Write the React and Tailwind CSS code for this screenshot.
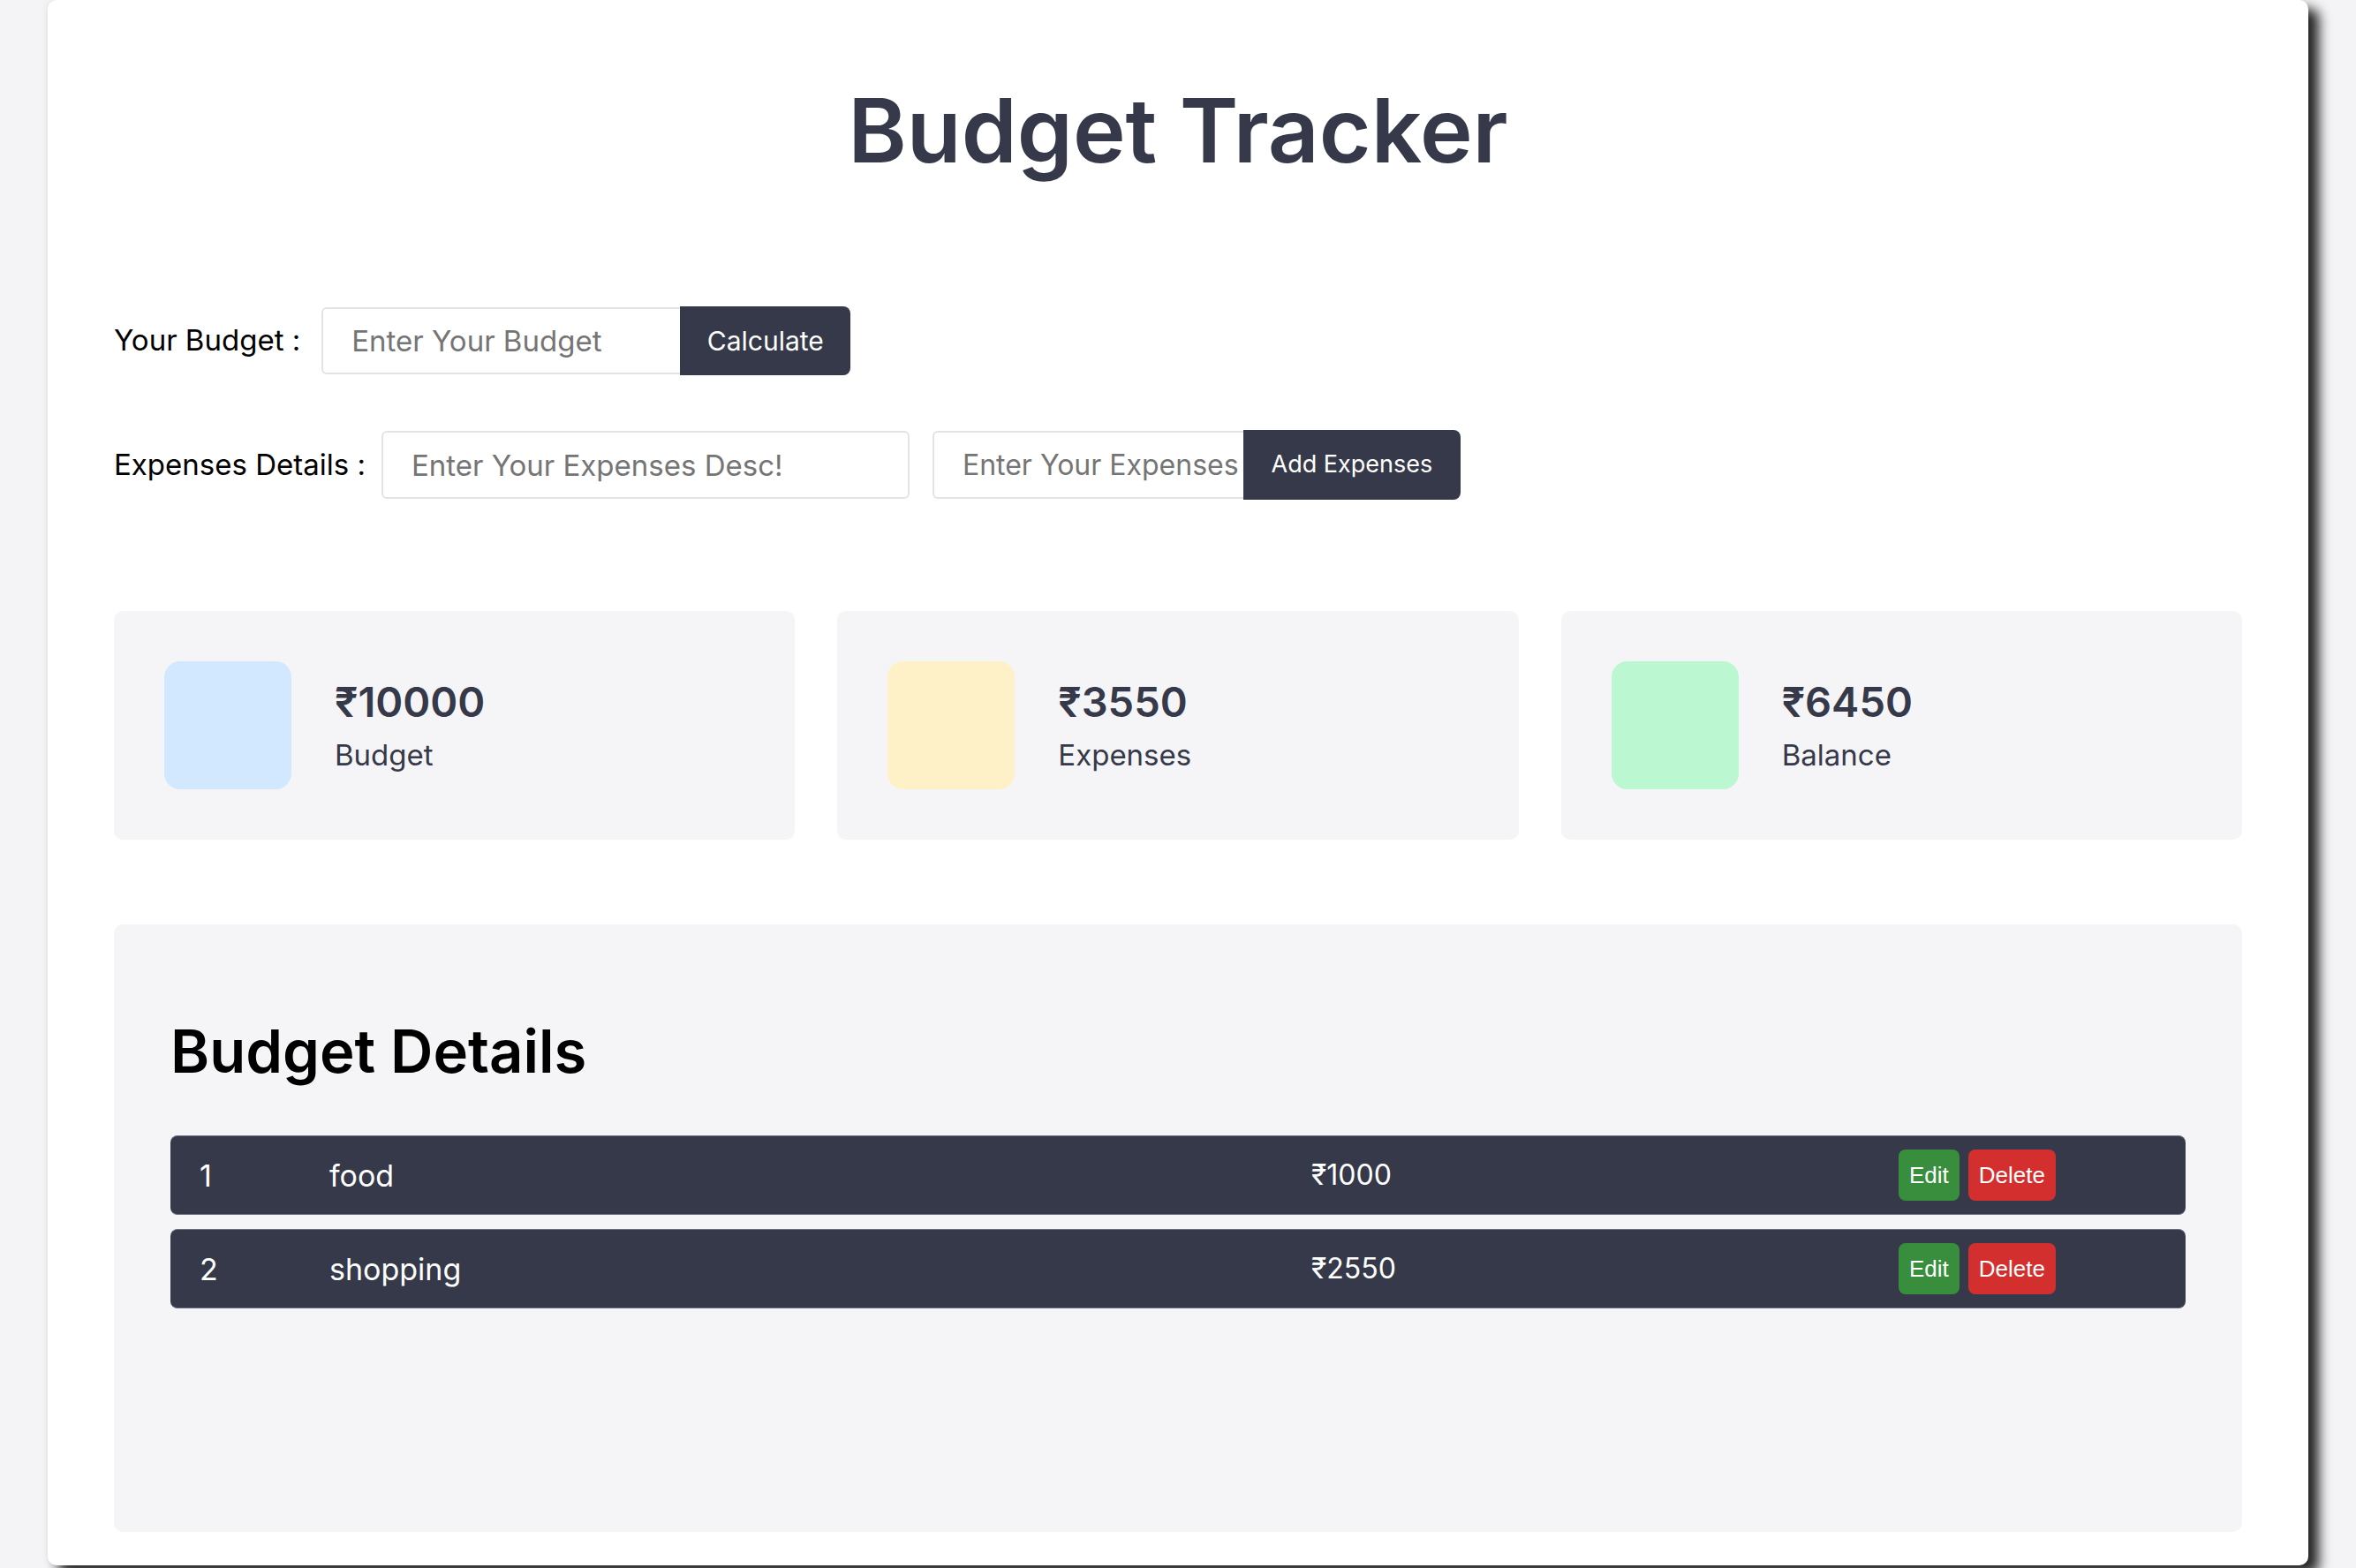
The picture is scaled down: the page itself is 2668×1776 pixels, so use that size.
import React from 'react';

const stats = [
  { amount: '₹10000', label: 'Budget', color: 'bg-[#d1e8fe]' },
  { amount: '₹3550', label: 'Expenses', color: 'bg-[#fef0c7]' },
  { amount: '₹6450', label: 'Balance', color: 'bg-[#bbf7d0]' },
];

const expenses = [
  { id: 1, desc: 'food', amount: '₹1000' },
  { id: 2, desc: 'shopping', amount: '₹2550' },
];

// Summary card
const StatCard = ({ amount, label, color }) => {
  return (
    <div className="flex items-center gap-[49px] h-[259px] px-[57px] bg-[#f5f5f7] rounded-[10px]">
      <div className={`w-[144px] h-[145px] rounded-[18px] ${color}`} />
      <div className="flex flex-col gap-[21px] text-[#363949]">
        <span className="text-[47px] font-semibold leading-none">{amount}</span>
        <span className="text-[33px] leading-none">{label}</span>
      </div>
    </div>
  );
};

// Expense row
const ExpenseRow = ({ id, desc, amount }) => {
  return (
    <div className="flex items-center h-[90px] pl-[33px] bg-[#363949] rounded-[8px] text-white text-[34px] border-t border-b border-[#6b6f80]">
      <span className="w-[147px]">{id}</span>
      <span className="w-[1112px]">{desc}</span>
      <span className="w-[665px] text-[32px]">{amount}</span>
      <div className="flex gap-[10px] font-['Liberation_Sans',Arial,sans-serif] text-[26px]">
        <button className="h-[58px] px-[12px] rounded-[8px] bg-[#388e3c] text-white">Edit</button>
        <button className="h-[58px] px-[12px] rounded-[8px] bg-[#d32f2f] text-white">Delete</button>
      </div>
    </div>
  );
};

function App() {
  return (
    <div className="min-h-screen bg-[#f4f4f6] font-['Inter',sans-serif]">
      <div className="ml-[54px] w-[2560px] h-[1773px] bg-white rounded-[10px] px-[75px] shadow-[12px_10px_14px_rgba(0,0,0,0.85),0_0_8px_rgba(0,0,0,0.08)]">
        <h1 className="pt-[97px] text-center text-[101px] font-semibold leading-none text-[#363949]">
          Budget Tracker
        </h1>

        {/* Budget input */}
        <div className="flex items-center mt-[149px] h-[78px]">
          <label className="text-[33px] text-black mr-[24px]">Your Budget :</label>
          <input
            type="text"
            placeholder="Enter Your Budget"
            className="w-[406px] h-[76px] pl-[32px] border-2 border-r-0 border-[#e3e3e3] rounded-l-[6px] text-[33px] outline-none placeholder:text-[#757575]"
          />
          <button className="w-[193px] h-[78px] bg-[#363949] text-white text-[30px] rounded-r-[8px]">
            Calculate
          </button>
        </div>

        {/* Expenses input */}
        <div className="flex items-center mt-[62px] h-[79px]">
          <label className="text-[33px] text-black mr-[18px]">Expenses Details :</label>
          <input
            type="text"
            placeholder="Enter Your Expenses Desc!"
            className="w-[598px] h-[77px] pl-[32px] border-2 border-[#e3e3e3] rounded-[6px] text-[33px] outline-none placeholder:text-[#757575]"
          />
          <input
            type="text"
            placeholder="Enter Your Expenses"
            className="ml-[26px] w-[352px] h-[77px] pl-[32px] pr-0 border-2 border-r-0 border-[#e3e3e3] rounded-l-[6px] text-[32px] outline-none placeholder:text-[#757575]"
          />
          <button className="w-[246px] h-[79px] bg-[#363949] text-white text-[27px] rounded-r-[8px]">
            Add Expenses
          </button>
        </div>

        {/* Summary */}
        <div className="grid grid-cols-3 gap-[48px] mt-[126px]">
          {stats.map((s) => (
            <StatCard key={s.label} {...s} />
          ))}
        </div>

        {/* Details */}
        <div className="mt-[96px] h-[688px] bg-[#f5f5f7] rounded-[10px] px-[64px] pt-[110px]">
          <h2 className="text-[67px] font-semibold leading-none text-black">Budget Details</h2>
          <div className="flex flex-col gap-[16px] mt-[62px]">
            {expenses.map((e) => (
              <ExpenseRow key={e.id} {...e} />
            ))}
          </div>
        </div>
      </div>
    </div>
  );
}

export default App;
